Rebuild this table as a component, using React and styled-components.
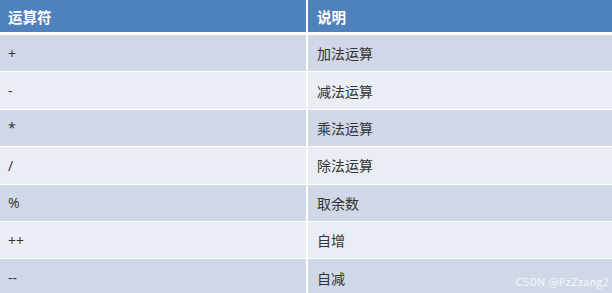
import React from 'react'
import styled, { createGlobalStyle } from 'styled-components'

const rows = [
  ['+', '加法运算'],
  ['-', '减法运算'],
  ['*', '乘法运算'],
  ['/', '除法运算'],
  ['%', '取余数'],
  ['++', '自增'],
  ['--', '自减'],
]

const App = () => {
  return (
    <Page>
      <GlobalStyle />
      <Table>
        <Row header>
          <Cell header>运算符</Cell>
          <Cell header>说明</Cell>
        </Row>
        {rows.map((r, i) => (
          <Row key={i} odd={i % 2 === 0}>
            <Cell>{r[0]}</Cell>
            <Cell>{r[1]}</Cell>
          </Row>
        ))}
      </Table>
      <Watermark>CSDN @PzZzang2</Watermark>
    </Page>
  )
}

export default App

const GlobalStyle = createGlobalStyle`
  html, body {
    margin: 0;
    padding: 0;
    background: #ffffff;
  }
`

const Page = styled.div`
  position: relative;
  width: 612px;
  height: 293px;
  overflow: hidden;
  background: #ffffff;
  font-family: "Open Sans", "Noto Sans CJK SC", sans-serif;
`

const Table = styled.div`
  display: flex;
  flex-direction: column;
  gap: 1px;
`

const Row = styled.div`
  display: grid;
  grid-template-columns: 306px 1fr;
  column-gap: 2px;
  height: ${p => (p.header ? '32px' : '36.4px')};
  margin-bottom: ${p => (p.header ? '2px' : '0')};
  & > div {
    background: ${p => (p.header ? '#4f81bd' : p.odd ? '#d0d8e7' : '#e9edf4')};
  }
`

const Cell = styled.div`
  display: flex;
  align-items: center;
  padding-left: 8px;
  font-size: ${p => (p.header ? '14.5px' : '14px')};
  font-weight: ${p => (p.header ? 700 : 400)};
  color: ${p => (p.header ? '#ffffff' : '#333333')};
  &:nth-child(2) {
    padding-left: 9px;
  }
`

const Watermark = styled.div`
  position: absolute;
  right: 3px;
  bottom: 4px;
  font-size: 11px;
  color: #f6f7fa;
  font-family: "Noto Sans CJK SC", "Noto Sans", sans-serif;
  letter-spacing: 0.2px;
`
